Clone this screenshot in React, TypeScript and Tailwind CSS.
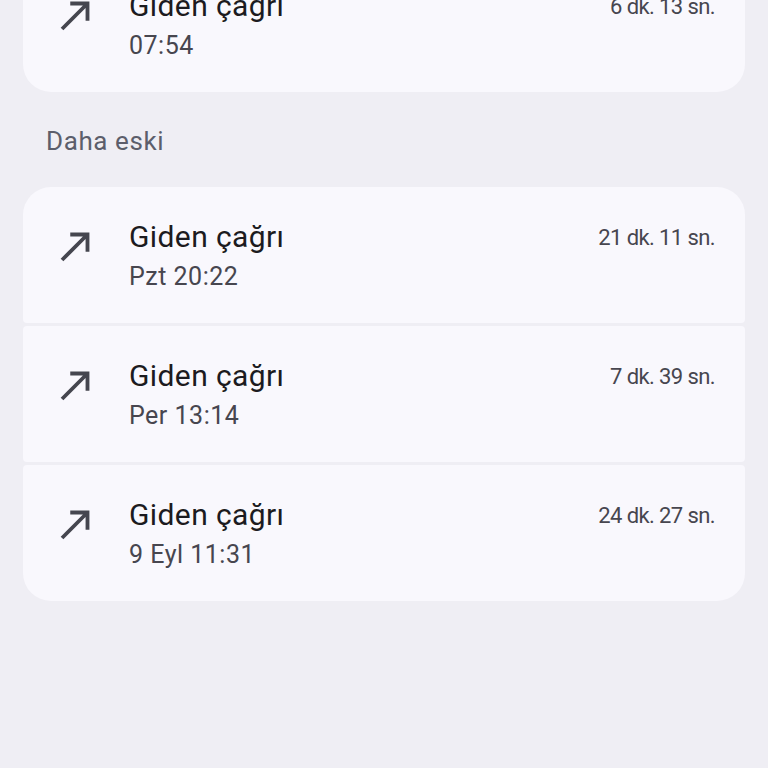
import React from 'react';

type Call = { label: string; time: string; duration: string };

const recent: Call[] = [{ label: 'Giden çağrı', time: '07:54', duration: '6 dk. 13 sn.' }];

const older: Call[] = [
  { label: 'Giden çağrı', time: 'Pzt 20:22', duration: '21 dk. 11 sn.' },
  { label: 'Giden çağrı', time: 'Per 13:14', duration: '7 dk. 39 sn.' },
  { label: 'Giden çağrı', time: '9 Eyl 11:31', duration: '24 dk. 27 sn.' },
];

const CallMade: React.FC = () => (
  <svg viewBox="0 0 24 24" className="w-[46px] h-[46px] shrink-0 mt-[3px]" fill="#45464f">
    <path d="M9 5v2h6.59L4 18.59 5.41 20 17 8.41V15h2V5z" />
  </svg>
);

const CallRow: React.FC<{ call: Call; pos: string }> = ({ call, pos }) => (
  <div className={`flex items-start h-[136px] pt-[33px] pl-[30px] pr-[30px] bg-[#f9f8fd] ${pos}`}>
    <CallMade />
    <div className="flex-1 ml-[30px]">
      <div className="text-[30px] leading-[34px] tracking-[0.4px] text-[#1c1b20]">{call.label}</div>
      <div className="text-[25px] leading-[34px] mt-[6px] tracking-[0.5px] text-[#47464f]">{call.time}</div>
    </div>
    <div className="text-[22px] leading-[30px] mt-[3px] tracking-[-0.6px] text-[#47464f]">{call.duration}</div>
  </div>
);

const CallGroup: React.FC<{ calls: Call[]; className?: string }> = ({ calls, className = '' }) => (
  <div className={`flex flex-col gap-[3px] ${className}`}>
    {calls.map((c, i) => {
      const first = i === 0;
      const last = i === calls.length - 1;
      const pos = `${first ? 'rounded-t-[28px]' : 'rounded-t-[4px]'} ${last ? 'rounded-b-[28px]' : 'rounded-b-[4px]'}`;
      return <CallRow key={i} call={c} pos={pos} />;
    })}
  </div>
);

export default function App() {
  return (
    <div className="min-h-screen bg-[#efeef4] px-[23px] overflow-hidden" style={{ fontFamily: 'Roboto, "Noto Sans", sans-serif' }}>
      <CallGroup calls={recent} className="-mt-[44px]" />
      <div className="text-[26px] leading-[30px] tracking-[0.6px] text-[#5c5e6b] pl-[23px] pt-[34px] pb-[31px]">Daha eski</div>
      <CallGroup calls={older} />
    </div>
  );
}
